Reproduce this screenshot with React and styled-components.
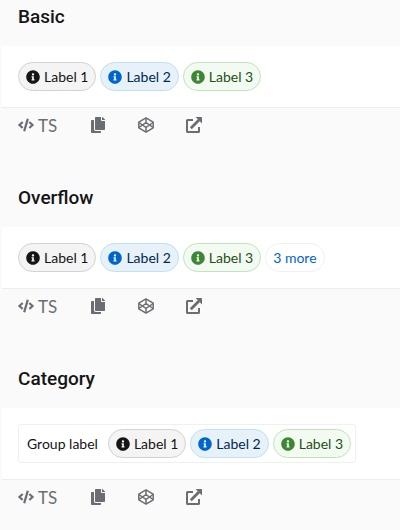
import React from "react";
import styled, { createGlobalStyle } from "styled-components";
import { FaInfoCircle, FaCode, FaCopy } from "react-icons/fa";

const GlobalStyle = createGlobalStyle`
  *, *::before, *::after { box-sizing: border-box; }
  body {
    margin: 0;
    background: #fafafa;
    color: #151515;
    font-family: Lato, "Liberation Sans", sans-serif;
    font-size: 14px;
    line-height: 21px;
  }
`;

const tones = {
  grey: { bg: "#f4f4f4", border: "#d2d2d2", text: "#151515", icon: "#151515" },
  blue: { bg: "#e7f1fa", border: "#bee1f4", text: "#002952", icon: "#0066cc" },
  green: { bg: "#f3faf2", border: "#bde5b8", text: "#1e4f18", icon: "#3e8635" },
};

const Page = styled.main`
  display: flex;
  flex-direction: column;
  gap: 44px;
  padding: 5px 0 0 2px;
`;

const Example = styled.section`
  display: flex;
  flex-direction: column;
`;

const Title = styled.h3`
  margin: 0 0 17px;
  padding: 0 16px;
  font-family: Roboto, "Liberation Sans", sans-serif;
  font-size: 19px;
  font-weight: 500;
  line-height: 24px;
`;

const Preview = styled.div`
  padding: 16px;
  background: #fff;
  border-bottom: 1px solid #ededed;
`;

const LabelRow = styled.ul`
  display: flex;
  flex-wrap: wrap;
  gap: 4px;
  margin: 0;
  padding: 0;
  list-style: none;
`;

const Pill = styled.li`
  display: flex;
  align-items: center;
  gap: 4px;
  height: 29px;
  padding: 0 7px;
  border: 1px solid ${({ $tone }) => tones[$tone].border};
  border-radius: 15px;
  background: ${({ $tone }) => tones[$tone].bg};
  color: ${({ $tone }) => tones[$tone].text};
  white-space: nowrap;

  svg {
    width: 14px;
    height: 14px;
    color: ${({ $tone }) => tones[$tone].icon};
  }
`;

const MoreButton = styled.button`
  height: 29px;
  padding: 0 7px;
  border: 1px solid #f0f0f0;
  border-radius: 15px;
  background: #fff;
  color: #0066cc;
  font: inherit;
  cursor: pointer;
`;

const Group = styled.div`
  display: inline-flex;
  align-items: center;
  gap: 10px;
  padding: 4px 4px 4px 8px;
  border: 1px solid #f0f0f0;
  border-radius: 3px;
  vertical-align: top;
`;

const Toolbar = styled.div`
  display: flex;
  align-items: center;
  height: 34px;
  padding: 0 16px;
  gap: 32px;
`;

const ToolButton = styled.button`
  display: flex;
  align-items: center;
  gap: 4px;
  min-width: ${({ $wide }) => ($wide ? "40px" : "16px")};
  padding: 0;
  border: 0;
  background: none;
  color: #6a6e73;
  font: inherit;
  font-size: 17px;
  cursor: pointer;

  svg {
    width: 16px;
    height: 16px;
  }
`;

const ExternalIcon = () => (
  <svg viewBox="0 0 16 16" fill="none" aria-hidden="true">
    <path d="M7 3H1.6Q1 3 1 3.6V14.4Q1 15 1.6 15H12.4Q13 15 13 14.4V10" stroke="currentColor" strokeWidth="2" />
    <path d="M4.8 11.2L13 3" stroke="currentColor" strokeWidth="2.8" />
    <path d="M9.6 0H15.5Q16 0 16 .5V6.4Z" fill="currentColor" />
  </svg>
);

const SandboxIcon = () => (
  <svg viewBox="0 0 16 16" fill="none" stroke="currentColor" strokeWidth="1.5" strokeLinejoin="round" aria-hidden="true">
    <path d="M8 .9L15.2 5.2V10.8L8 15.1L.8 10.8V5.2Z" />
    <path d="M8 5.6L11.6 8L8 10.4L4.4 8Z" />
    <path d="M8 1V5.6M8 10.4V15M1 5.5L4.4 8L1 10.5M15 5.5L11.6 8L15 10.5" />
  </svg>
);

const labels = [
  { text: "Label 1", tone: "grey" },
  { text: "Label 2", tone: "blue" },
  { text: "Label 3", tone: "green" },
];

const Labels = ({ more }) => (
  <LabelRow>
    {labels.map(({ text, tone }) => (
      <Pill key={text} $tone={tone}>
        <FaInfoCircle aria-hidden="true" />
        {text}
      </Pill>
    ))}
    {more && (
      <li>
        <MoreButton type="button">{more}</MoreButton>
      </li>
    )}
  </LabelRow>
);

const CodeToolbar = () => (
  <Toolbar>
    <ToolButton type="button" $wide>
      <FaCode aria-hidden="true" />
      TS
    </ToolButton>
    <ToolButton type="button" aria-label="Copy code">
      <FaCopy />
    </ToolButton>
    <ToolButton type="button" aria-label="Open in sandbox">
      <SandboxIcon />
    </ToolButton>
    <ToolButton type="button" aria-label="Open in new window">
      <ExternalIcon />
    </ToolButton>
  </Toolbar>
);

const LabelExample = ({ title, children }) => (
  <Example>
    <Title>{title}</Title>
    <Preview>{children}</Preview>
    <CodeToolbar />
  </Example>
);

export default function App() {
  return (
    <>
      <GlobalStyle />
      <Page>
        <LabelExample title="Basic">
          <Labels />
        </LabelExample>
        <LabelExample title="Overflow">
          <Labels more="3 more" />
        </LabelExample>
        <LabelExample title="Category">
          <Group role="group" aria-labelledby="group-label">
            <span id="group-label">Group label</span>
            <Labels />
          </Group>
        </LabelExample>
      </Page>
    </>
  );
}
